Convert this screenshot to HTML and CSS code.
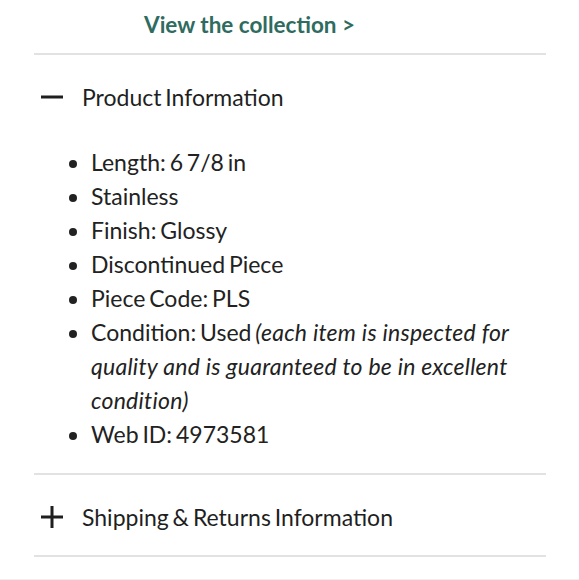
FILE: index.html
```html
<!DOCTYPE html>
<html lang="en">
<head>
<meta charset="utf-8">
<title>Product details</title>
<link rel="stylesheet" href="styles.css">
</head>
<body>
<div class="page">
  <div class="link-row">
    <a class="collection-link" href="#">View the collection &gt;</a>
  </div>
  <div class="accordion">
    <div class="section">
      <div class="section-header">
        <svg class="toggle" width="22" height="22" viewBox="0 0 22 22" aria-hidden="true">
          <rect x="0" y="9.5" width="22" height="3" fill="#1f1f1f"/>
        </svg>
        <span class="section-title">Product Information</span>
      </div>
      <ul class="details">
        <li>Length: 6 7/8 in</li>
        <li>Stainless</li>
        <li>Finish: Glossy</li>
        <li>Discontinued Piece</li>
        <li>Piece Code: PLS</li>
        <li>Condition: Used <em>(each item is inspected for quality and is guaranteed to be in excellent condition)</em></li>
        <li>Web ID: 4973581</li>
      </ul>
    </div>
    <div class="section">
      <div class="section-header">
        <svg class="toggle" width="22" height="22" viewBox="0 0 22 22" aria-hidden="true">
          <rect x="0" y="9.5" width="22" height="3" fill="#1f1f1f"/>
          <rect x="9.5" y="0" width="3" height="22" fill="#1f1f1f"/>
        </svg>
        <span class="section-title">Shipping &amp; Returns Information</span>
      </div>
    </div>
  </div>
</div>
</body>
</html>
```
FILE: styles.css
```css
html, body {
  margin: 0;
  padding: 0;
  background: #ffffff;
}

body {
  font-family: Lato, "Noto Sans", sans-serif;
  color: #222222;
  height: 580px;
  overflow: hidden;
}

.page {
  padding: 0 33px 0 34px;
  height: 579px;
  border-bottom: 1px solid #f0f0f0;
}

.link-row {
  height: 53px;
  padding-left: 110px;
  box-sizing: border-box;
  padding-top: 9px;
}

.collection-link {
  font-size: 22.5px;
  font-weight: 700;
  line-height: 32px;
  color: #2f6b5f;
  text-decoration: none;
}

.section {
  border-top: 2px solid #e2e2e2;
}

.section:last-child {
  border-bottom: 2px solid #e2e2e2;
}

.section-header {
  display: flex;
  align-items: center;
  gap: 19px;
  height: 80px;
  padding: 4px 0 0 7px;
  box-sizing: border-box;
}

.toggle {
  flex: none;
}

.section-title {
  font-size: 23px;
  line-height: 28px;
  word-spacing: -2px;
  color: #1f1f1f;
}

.details {
  margin: 10px 0 22px;
  padding-left: 57px;
  font-size: 23px;
  line-height: 34px;
  word-spacing: -2px;
  color: #222222;
}

.details em {
  font-style: italic;
  letter-spacing: 0.25px;
  word-spacing: 0;
}
```
